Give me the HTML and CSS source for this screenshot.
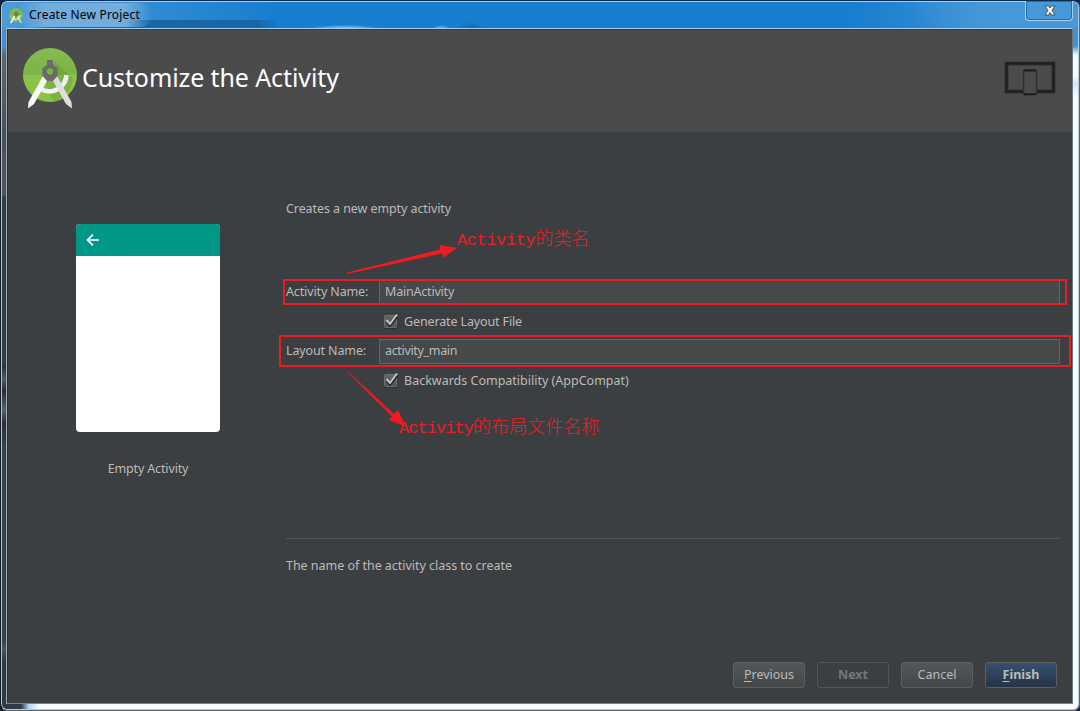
FILE: index.html
```html
<!DOCTYPE html>
<html lang="en">
<head>
<meta charset="utf-8">
<title>Create New Project</title>
<link rel="stylesheet" href="styles.css">
</head>
<body>
<svg class="defs" width="0" height="0">
  <defs>
    <linearGradient id="disc" x1="0" y1="0" x2="0" y2="1">
      <stop offset="0" stop-color="#85bb50"/><stop offset=".5" stop-color="#7db446"/>
      <stop offset=".5" stop-color="#8bc34a"/><stop offset="1" stop-color="#8bc34a"/>
    </linearGradient>
    <symbol id="studio" viewBox="0 0 54 61">
      <circle cx="27" cy="27" r="27" fill="url(#disc)"/>
      <path d="M32 13 L50 31 A27 27 0 0 1 31 53.7 L25 44 L22 30Z" fill="#558b2f" opacity=".3"/>
      <path d="M18 41 Q27 46 35 41 Q43 36 43.500 27" fill="none" stroke="#f1f1f1" stroke-width="4.600"/>
      <path d="M20 28 L25 31 L11 56 L5 60.500 L5.500 54Z" fill="#fafafa"/>
      <path d="M34 28 L29 31 L43 56 L49 60.500 L48.500 54Z" fill="#dedede"/>
      <path d="M24 12h6v5l4.500 3v8L30 33h-6l-4.500-5v-8l4.500-3Z" fill="#6b6b6b"/>
      <circle cx="27" cy="23.500" r="3.700" fill="#7cb342" stroke="#555" stroke-width=".6"/>
    </symbol>
    <linearGradient id="box" x1="0" y1="0" x2="0" y2="1">
      <stop offset="0" stop-color="#626465"/><stop offset="1" stop-color="#505253"/>
    </linearGradient>
    <symbol id="check" viewBox="0 0 16 16">
      <rect x="1.500" y="2.500" width="12" height="12" rx="1" fill="url(#box)" stroke="#6d6f70"/>
      <path d="M1 15.500h13" stroke="#2c2e2f"/>
      <path d="M4 7.500 L7 11.500 L14 2.500" fill="none" stroke="#222" stroke-width="2.200" transform="translate(0 1.300)"/>
      <path d="M3.500 7 L7 11 L14 1.500" fill="none" stroke="#c4c4c4" stroke-width="2"/>
    </symbol>
  </defs>
</svg>
<div class="window">
  <header class="titlebar">
    <svg class="app-icon" width="14" height="16"><use href="#studio"/></svg>
    <span class="caption">Create New Project</span>
    <span class="close"><svg width="12" height="11" viewBox="0 0 12 11"><path d="M1 1h3.500L6 3l1.500-2H11L8 5.300 11 10H7.500L6 7.500 4.500 10H1l3-4.700Z" fill="#fff" stroke="#44505c"/></svg></span>
  </header>
  <main class="client">
    <section class="banner">
      <svg class="logo" width="54" height="61"><use href="#studio"/></svg>
      <h1>Customize the Activity</h1>
      <svg class="devices" width="52" height="36" viewBox="0 0 52 36">
        <rect x="2.500" y="2.500" width="47" height="28" fill="none" stroke="#333" stroke-width="4"/>
        <rect x="2.500" y="2.500" width="47" height="28" fill="none" stroke="#202020" stroke-width="2.400"/>
        <rect x="19.500" y="9" width="13" height="24.500" rx="1" fill="#4b4b4b" stroke="#303030" stroke-width="1.500"/>
        <path d="M20 9.500h12M20 33.300h12" stroke="#1e1e1e" stroke-width="2"/>
      </svg>
    </section>
    <section class="content">
      <aside class="template">
        <div class="phone"><div class="appbar"><svg width="14" height="12" viewBox="0 0 14 12"><path d="M13 6H1.500M7 .7L1.500 6 7 11.300" fill="none" stroke="#fff" stroke-width="1.700"/></svg></div></div>
        <p class="label">Empty Activity</p>
      </aside>
      <div class="form">
        <p class="intro">Creates a new empty activity</p>
        <div class="row"><label>Activity Name:</label><div class="field t-main">MainActivity</div></div>
        <div class="option"><svg width="16" height="16"><use href="#check"/></svg><span class="t-gen">Generate Layout File</span></div>
        <div class="row"><label>Layout Name:</label><div class="field t-lay">activity_main</div></div>
        <div class="option"><svg width="16" height="16"><use href="#check"/></svg><span>Backwards Compatibility (AppCompat)</span></div>
        <p class="hint">The name of the activity class to create</p>
      </div>
    </section>
    <footer class="actions">
      <button class="btn"><span><u>P</u>revious</span></button>
      <button class="btn off">Next</button>
      <button class="btn">Cancel</button>
      <button class="btn primary"><span><u>F</u>inish</span></button>
    </footer>
  </main>
  <div class="mark mark-name"></div>
  <div class="mark mark-layout"></div>
  <svg class="arrows" width="1080" height="711">
    <path d="M347 272.500 L440 249.500 L439.500 245 L457 248 L443 258 L442.500 253.500 L348 273.800Z"/>
    <path d="M348 371.500 L394 414 L398 410 L405.500 426.500 L388.500 420 L392 416.500 L348.500 373Z"/>
  </svg>
  <span class="note note-name">Activity<b>的类名</b></span>
  <span class="note note-layout">Activity<b>的布局文件名称</b></span>
</div>
</body>
</html>
```
FILE: styles.css
```css
* { box-sizing: border-box; }
body { margin: 0; background: #10253a; font-family: "Noto Sans", "Open Sans", sans-serif; overflow: hidden; }
.defs { position: absolute; }
p, h1 { margin: 0; font-weight: 400; }

.window {
  position: relative;
  width: 1080px; height: 711px;
  padding: 1px 5px 5px 5px;
  border: 1px solid #606468;
  border-top-color: #082d50;
  border-left-color: #17191c;
  border-radius: 7px;
  box-shadow: inset 0 0 0 1px #b4cadb;
  background:
    linear-gradient(90deg, #2e3a48 0 20px, #b8d6f7 28px, #f5fbff 38px) 0 100% / 100% 8px no-repeat,
    linear-gradient(180deg, #3d93d6 0 45px, #62666d 54px, #47525e 130px, #4b5260 194px, #303c48 196px 360px, #2c343f 366px, #4d5a6b 378px, #262e36 390px, #53606f 409px, #292f38 422px, #34414e 445px 640px, #4a5564 648px, #2e3a46 660px) 0 0 / 8px 100% no-repeat,
    linear-gradient(180deg, #3d93d6 0 45px, #f4ffff 54px 75px, #c8e8fc 82px, #f6ffff 94px) 100% 0 / 8px 100% no-repeat,
    #187ecf;
}
.titlebar {
  display: flex; align-items: center; height: 26px; margin: 0 -4px; padding-left: 7px;
  background:
    radial-gradient(38px 4px at 343px 27px, #b5dcff, #8fd0ff00),
    radial-gradient(9px 4px at 439px 27px, #8ccaff, #8fd0ff00),
    radial-gradient(14px 6px at 469px 26px, #176aac, #176aac00),
    linear-gradient(90deg, #1767a700 30px, #1767a7 60px 255px, #1767a700 280px) 0 18px / 100% 8px no-repeat,
    linear-gradient(65deg, #187ecf00 84%, #4798d8 92%),
    linear-gradient(90deg, #4d9bd8, #187ecf 270px, #187ecf 850px, #3d92d5 1000px);
  border-radius: 6px 6px 0 0;
}
.app-icon { flex: none; margin-top: 2px; }
.caption {
  margin: 0 0 0 -6px; padding: 0 12px; color: #000;
  font: 12px/24px "Noto Sans", sans-serif; letter-spacing: .2px;
  border-radius: 12px;
  background: linear-gradient(90deg, #6ba9dc00, #73addb 20% 80%, #6ba9dc00);
}
.close {
  display: grid; place-items: center; align-self: flex-start;
  width: 48px; height: 20px; margin: -1px 5px 0 auto;
  border: 1px solid #a7cff0; border-top: 0; border-radius: 0 0 4px 4px;
  box-shadow: inset 0 0 0 1px #286da5;
}
.close svg { margin: -1px 0 0 2px; }

.client {
  display: flex; flex-direction: column; width: 1067px; height: 676px;
  border: 1px solid #9badb8; border-top-color: #9fcdef; border-right-color: #70787b; border-bottom-color: #7b8083;
  box-shadow: inset 1px 1px 0 #24323c; background: #3c3f41;
}
.banner { display: flex; flex: none; align-items: flex-start; height: 103px; margin: 0 0 0 1px; padding: 19px 16px 0 15px; background: #4b4b4b; border-top: 1px solid #254254; }
.banner h1 { margin: 10px 0 0 5px; font: 25px/36px "Noto Sans", sans-serif; letter-spacing: -.1px; color: #fff; white-space: nowrap; }
.devices { margin: 12px 0 0 auto; }
.logo { flex: none; margin-top: -1px; }
.content { display: grid; grid-template-columns: 278px 775px; height: 448px; color: #bbb; font-size: 12.5px; line-height: 20px; }
.template { padding: 92px 0 0 69px; width: 213px; }
.phone { height: 208px; border-radius: 4px; overflow: hidden; background: #fff; }
.appbar { display: flex; align-items: center; height: 32px; padding-left: 10px; background: #009688; }
.label { margin-top: 27px; text-align: center; letter-spacing: -.14px; }
.form { padding: 67px 0 0 1px; }
.intro { margin-bottom: 61px; letter-spacing: -.08px; }
.row { display: flex; align-items: center; height: 25px; }
.row label { width: 93px; padding-bottom: 1px; letter-spacing: -.13px; }
.field { flex: 1; height: 25px; padding-left: 5px; border: 1px solid #646464; background: #45494a; line-height: 22px; }
.t-main { letter-spacing: -.2px; }
.t-lay { letter-spacing: -.33px; }
.t-gen { letter-spacing: -.13px; }
.option { display: flex; align-items: center; gap: 5px; height: 34px; padding-left: 97px; }
.option svg { margin-top: -3px; }
.hint { margin-top: 140px; padding-top: 17px; border-top: 1px solid #555; letter-spacing: -.03px; }
.actions { display: flex; justify-content: flex-end; gap: 12px; margin-top: auto; padding: 0 15px 15px 0; }
.btn { width: 72px; height: 26px; padding: 0; border: 1px solid #5e6060; border-radius: 3px; background: linear-gradient(#525758, #434749); color: #bbb; font: 12.500px/22px "Noto Sans", sans-serif; }
.btn u { text-underline-offset: 2px; }
.off { background: #3c3f41; color: #777; font-weight: 700; border-color: #555; }
.primary { background: linear-gradient(#365070, #253447); font-weight: 700; }

.mark { position: absolute; border: 2px solid #ed1c24; }
.mark-name { left: 282px; top: 278px; width: 784px; height: 26px; }
.mark-layout { left: 278px; top: 334px; width: 792px; height: 32px; }
.arrows { position: absolute; left: -1px; top: -1px; fill: #ed1c24; }
.note { position: absolute; color: #ed1c24; font: 17px/24px "Liberation Mono", monospace; white-space: nowrap; }
.note b { font: 18px/24px "Noto Sans CJK SC", sans-serif; font-weight: 300; letter-spacing: .1px; }
.note-name { left: 456px; top: 224px; letter-spacing: -.4px; }
.note-layout { left: 398px; top: 412px; letter-spacing: -.95px; }
```
